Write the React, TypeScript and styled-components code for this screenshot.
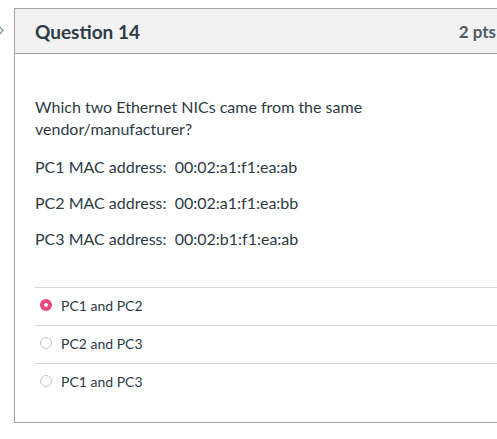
import React, { useState } from "react"
import styled, { createGlobalStyle } from "styled-components"

const GlobalStyle = createGlobalStyle`
  html, body {
    margin: 0;
    padding: 0;
    background: #fff;
    overflow: hidden;
  }
  body {
    font-family: Lato, "Open Sans", sans-serif;
    color: #2d3b45;
  }
`

const Page = styled.div`
  display: flex;
  align-items: flex-start;
  padding: 8px 0 0 0;
  width: 520px;
`

const Chevron = styled.div`
  width: 14px;
  height: 45px;
  display: flex;
  align-items: center;
  margin-left: -4px;
  margin-right: 4px;
  svg {
    width: 9px;
    height: 15px;
  }
`

const Card = styled.section`
  width: 500px;
  border: 1px solid #a5a5a5;
  border-right: none;
  background: #fff;
  flex-shrink: 0;
`

const Header = styled.header`
  display: flex;
  justify-content: space-between;
  align-items: center;
  height: 44px;
  padding: 0 19px 0 20px;
  background: #f2f2f2;
  border-bottom: 1px solid #a5a5a5;
`

const Title = styled.h2`
  margin: 0;
  font-size: 19px;
  font-weight: 700;
  color: #2d3b45;
`

const Points = styled.span`
  font-size: 17px;
  font-weight: 700;
  color: #4d5a63;
`

const Body = styled.div`
  padding: 42px 0 21px 20px;
`

const Text = styled.p<{ lead?: boolean }>`
  margin: 0 0 ${p => (p.lead ? "16px" : "14px")};
  font-size: 16px;
  line-height: 22px;
  width: 360px;
`

const Answers = styled.ul`
  list-style: none;
  margin: 37px 0 0;
  padding: 0;
`

const Answer = styled.li`
  display: flex;
  align-items: center;
  padding: 0 0 3px 5px;
  box-sizing: border-box;
  height: 38px;
  border-top: 1px solid #d8d8d8;
  cursor: pointer;
`

const Radio = styled.span<{ checked: boolean }>`
  box-sizing: border-box;
  width: 12px;
  height: 12px;
  border-radius: 50%;
  margin-right: 9px;
  background: #fff;
  border: ${p => (p.checked ? "4px solid #e9457f" : "1px solid #c7c7c7")};
`

const Label = styled.span`
  font-size: 14px;
  color: #2d3b45;
`

const options = ["PC1 and PC2", "PC2 and PC3", "PC1 and PC3"]

export default function App() {
  const [selected, setSelected] = useState(0)

  return (
    <>
      <GlobalStyle />
      <Page>
        <Chevron>
          <svg viewBox="0 0 9 15" fill="none" stroke="#7f97b5" strokeWidth="1.3">
            <polyline points="1,1 7,7.5 1,14" />
          </svg>
        </Chevron>
        <Card>
          <Header>
            <Title>Question 14</Title>
            <Points>2 pts</Points>
          </Header>
          <Body>
            <Text lead>Which two Ethernet NICs came from the same vendor/manufacturer?</Text>
            <Text>PC1 MAC address:&nbsp; 00:02:a1:f1:ea:ab</Text>
            <Text>PC2 MAC address:&nbsp; 00:02:a1:f1:ea:bb</Text>
            <Text>PC3 MAC address:&nbsp; 00:02:b1:f1:ea:ab</Text>
            <Answers>
              {options.map((o, i) => (
                <Answer key={o} onClick={() => setSelected(i)}>
                  <Radio checked={selected === i} />
                  <Label>{o}</Label>
                </Answer>
              ))}
            </Answers>
          </Body>
        </Card>
      </Page>
    </>
  )
}
